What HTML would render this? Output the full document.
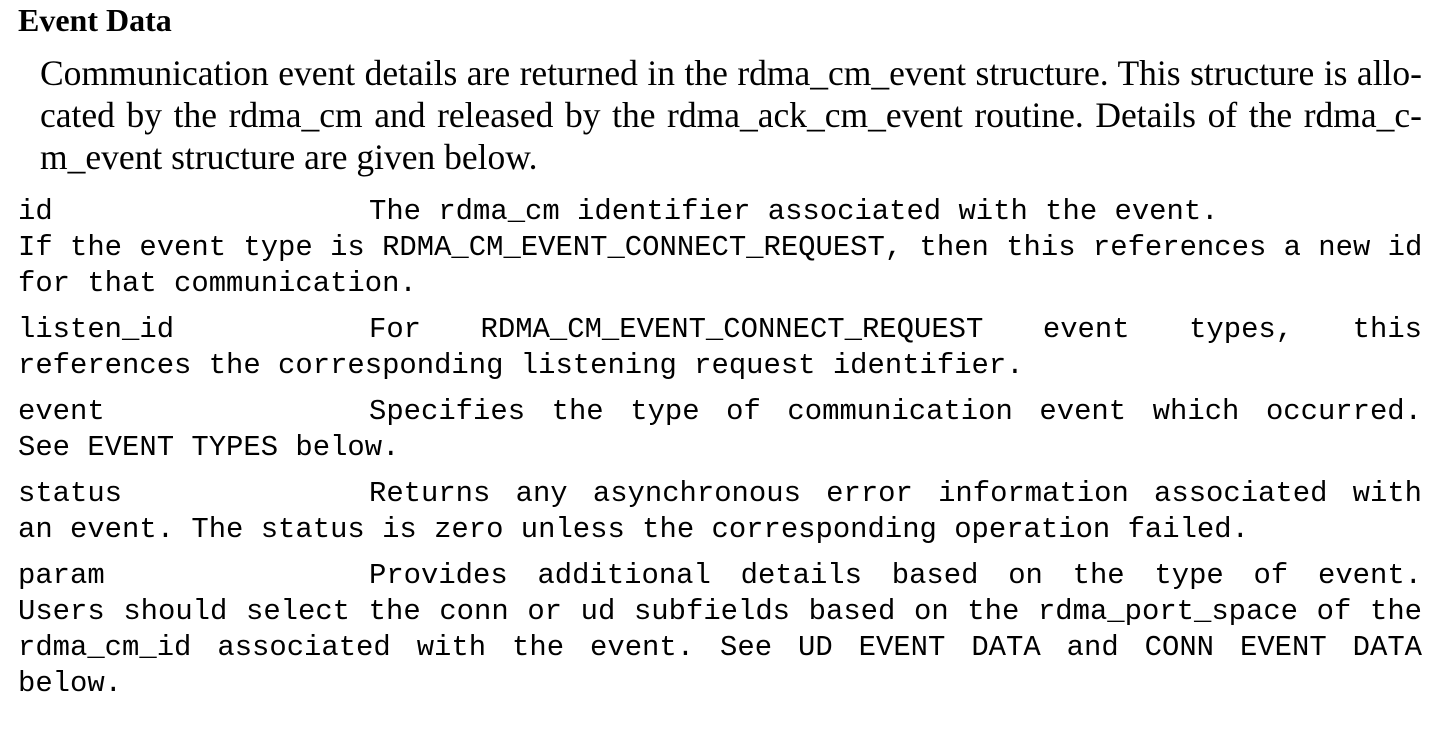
<!DOCTYPE html>
<html><head><meta charset="utf-8"><style>
body{margin:0;width:1450px;height:736px;background:#fff;color:#000;overflow:hidden;position:relative}
.h{position:absolute;left:18px;top:2px;font:bold 32px/36px "Liberation Serif",serif}
.p{position:absolute;left:40px;width:1382px;top:52px;font:35.5px/42px "Liberation Serif",serif;white-space:nowrap}
.p div{text-align:justify;text-align-last:justify}
.p div.l{text-align-last:left}
.m{position:absolute;left:18px;width:1404px;top:194px;font:28.9px/36px "Liberation Mono",monospace}
.e{margin-bottom:10px}
.r{display:flex;white-space:nowrap}
.lb{width:351px;flex:none;white-space:pre}
.j{flex:1;text-align:justify;text-align-last:justify}
.jl{text-align:justify;text-align-last:justify;white-space:nowrap}
.pl{white-space:pre}
</style></head><body>
<div class="h">Event Data</div>
<div class="p">
<div>Communication event details are returned in the rdma_cm_event structure. This structure is allo-</div>
<div>cated by the rdma_cm and released by the rdma_ack_cm_event routine. Details of the rdma_c-</div>
<div class="l">m_event structure are given below.</div>
</div>
<div class="m">
<div class="e"><div class="r"><span class="lb">id</span><span class="pl">The rdma_cm identifier associated with the event.</span></div>
<div class="pl">If the event type is RDMA_CM_EVENT_CONNECT_REQUEST, then this references a new id</div>
<div class="pl">for that communication.</div></div>
<div class="e"><div class="r"><span class="lb">listen_id</span><span class="j">For RDMA_CM_EVENT_CONNECT_REQUEST event types, this</span></div>
<div class="pl">references the corresponding listening request identifier.</div></div>
<div class="e"><div class="r"><span class="lb">event</span><span class="j">Specifies the type of communication event which occurred.</span></div>
<div class="pl">See EVENT TYPES below.</div></div>
<div class="e"><div class="r"><span class="lb">status</span><span class="j">Returns any asynchronous error information associated with</span></div>
<div class="pl">an event. The status is zero unless the corresponding operation failed.</div></div>
<div class="e"><div class="r"><span class="lb">param</span><span class="j">Provides additional details based on the type of event.</span></div>
<div class="jl">Users should select the conn or ud subfields based on the rdma_port_space of the</div>
<div class="jl">rdma_cm_id associated with the event. See UD EVENT DATA and CONN EVENT DATA</div>
<div class="pl">below.</div></div>
</div>
</body></html>
